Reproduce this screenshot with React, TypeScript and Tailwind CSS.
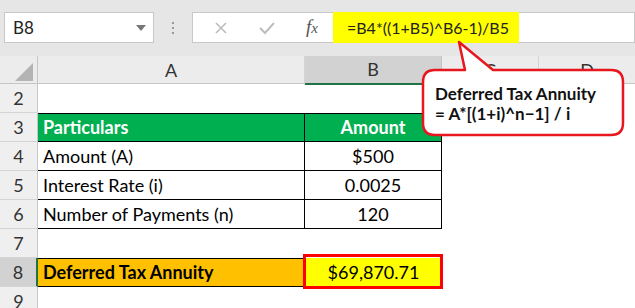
import React from "react"

const font = { fontFamily: "Lato, 'Open Sans', sans-serif" }

const cols = "grid grid-cols-[38px_267px_137px_97px_96px]"

function RowHead({ n, active }: { n: number; active?: boolean }) {
    return (
        <div
            className={
                "flex items-center justify-center border-b border-[#d4d4d4] text-[18px] text-[#333] " +
                (active ? "bg-[#d2d2d2] border-r-2 border-r-[#217346]" : "bg-[#efefef] border-r border-r-[#c6c6c6]")
            }
        >
            {n}
        </div>
    )
}

function EmptyRow({ n }: { n: number }) {
    return (
        <div className={cols + " h-[29px] bg-white"}>
            <RowHead n={n} />
            <div />
            <div />
            <div />
            <div />
        </div>
    )
}

function DataRow({ n, label, value }: { n: number; label: string; value: string }) {
    return (
        <div className={cols + " h-[29px] bg-white"}>
            <RowHead n={n} />
            <div className="flex items-center border-b border-r border-black pl-[5px] text-[18px] text-black">{label}</div>
            <div className="flex items-center justify-center border-b border-r border-black text-[18px] text-black">{value}</div>
            <div />
            <div />
        </div>
    )
}

export default function App() {
    return (
        <div className="relative w-[635px] h-[308px] overflow-hidden bg-white" style={font}>
            {/* formula bar */}
            <div className="flex h-[56px] items-start bg-[#e6e6e6] pt-[12px]">
                <div className="ml-[4px] flex h-[31px] w-[150px] items-center justify-between border border-[#c8c8c8] bg-white pl-[8px] pr-[6px] text-[17px] text-[#222]">
                    <span>B8</span>
                    <svg width="12" height="8" viewBox="0 0 12 8">
                        <path d="M1 1 L11 1 L6 7 Z" fill="#777" />
                    </svg>
                </div>
                <div className="flex h-[31px] w-[38px] flex-col items-center justify-center gap-[3px]">
                    <span className="h-[2px] w-[2px] bg-[#9a9a9a]" />
                    <span className="h-[2px] w-[2px] bg-[#9a9a9a]" />
                    <span className="h-[2px] w-[2px] bg-[#9a9a9a]" />
                </div>
                <div className="flex h-[31px] flex-1 items-stretch border border-[#c8c8c8] bg-white">
                    <div className="flex w-[140px] items-center justify-around pl-[6px]">
                        <svg width="14" height="14" viewBox="0 0 14 14">
                            <path d="M2 2 L12 12 M12 2 L2 12" stroke="#bdbdbd" strokeWidth="1.6" />
                        </svg>
                        <svg width="18" height="14" viewBox="0 0 18 14">
                            <path d="M2 7 L7 12 L16 2" stroke="#bdbdbd" strokeWidth="2" fill="none" />
                        </svg>
                        <span className="text-[19px] italic text-[#555]" style={{ fontFamily: "'Liberation Serif', serif" }}>
                            f<span className="text-[15px]">x</span>
                        </span>
                    </div>
                    <div className="my-[-1px] flex w-[186px] items-center whitespace-nowrap bg-[#ffff00] pl-[14px] text-[16px] text-[#222]">
                        =B4*((1+B5)^B6-1)/B5
                    </div>
                </div>
            </div>

            {/* column headers */}
            <div className={cols + " h-[28px] border-b border-[#c6c6c6] bg-[#ececec]"}>
                <div className="relative border-r border-[#c6c6c6]">
                    <svg className="absolute bottom-[4px] right-[4px]" width="18" height="18" viewBox="0 0 18 18">
                        <path d="M18 0 L18 18 L0 18 Z" fill="#b4b4b4" />
                    </svg>
                </div>
                <div className="flex items-center justify-center border-r border-[#d4d4d4] text-[18px] text-[#333]">A</div>
                <div className="flex items-center justify-center border-b-2 border-r border-b-[#217346] border-r-[#c6c6c6] bg-[#d2d2d2] text-[18px] text-[#333]">
                    B
                </div>
                <div className="flex items-center justify-center border-r border-[#d4d4d4] text-[18px] text-[#333]">C</div>
                <div className="flex items-center justify-center text-[18px] text-[#333]">D</div>
            </div>

            <EmptyRow n={2} />

            {/* header row */}
            <div className={cols + " h-[29px] bg-white"}>
                <RowHead n={3} />
                <div className="flex items-center border-y border-r border-black bg-[#00b050] pl-[5px] text-[18px] font-bold text-white">
                    Particulars
                </div>
                <div className="flex items-center justify-center border-y border-r border-black bg-[#00b050] text-[18px] font-bold text-white">
                    Amount
                </div>
                <div />
                <div />
            </div>
            <DataRow n={4} label="Amount (A)" value="$500" />
            <DataRow n={5} label="Interest Rate (i)" value="0.0025" />
            <DataRow n={6} label="Number of Payments (n)" value="120" />
            <EmptyRow n={7} />

            {/* result row */}
            <div className={cols + " h-[29px] bg-white"}>
                <RowHead n={8} active />
                <div className="flex items-center border-y border-r border-black bg-[#ffc000] pl-[5px] text-[18px] font-bold text-black">
                    Deferred Tax Annuity
                </div>
                <div className="relative flex items-center justify-center bg-[#ffff00] text-[18px] text-black">
                    <div className="absolute -left-[2px] -top-[4px] -bottom-[2px] -right-[1px] border-[3px] border-[#ff0000]" />
                    <span className="relative">$69,870.71</span>
                </div>
                <div />
                <div />
            </div>
            <EmptyRow n={9} />

            {/* callout */}
            <div className="absolute left-[420px] top-[40px] h-[98px] w-[206px]">
                <svg className="absolute inset-0" width="206" height="98" viewBox="0 0 206 98">
                    <path
                        d="M39 2 L73 30 L191 30 Q203 30 203 42 L203 83 Q203 95 191 95 L15 95 Q3 95 3 83 L3 42 Q3 30 15 30 L45 30 Z"
                        fill="#fff"
                        stroke="#e8161d"
                        strokeWidth="2.5"
                        strokeLinejoin="round"
                    />
                </svg>
                <div className="absolute left-[15px] top-[44px] flex flex-col whitespace-nowrap text-[17px] font-bold leading-[20px] text-[#111]">
                    <span>Deferred Tax Annuity</span>
                    <span>= A*[(1+i)^n−1] / i</span>
                </div>
            </div>
        </div>
    )
}
